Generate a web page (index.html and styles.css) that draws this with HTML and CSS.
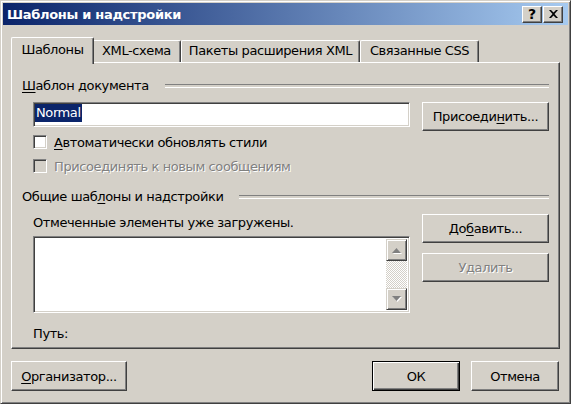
FILE: index.html
```html
<!DOCTYPE html>
<html lang="ru">
<head>
    <meta charset="UTF-8" />
    <meta name="viewport" content="width=device-width, initial-scale=1.0" />
    <title>Шаблоны и надстройки</title>
    <link rel="stylesheet" href="styles.css">
</head>
<body>
    <div class="window">
        <div class="titlebar">
            <span class="title">Шаблоны и надстройки</span>
            <div class="caption-buttons">
                <button class="cap-btn help">?</button>
                <button class="cap-btn">
                    <svg width="9" height="8" viewBox="0 0 9 8">
                        <path d="M0 0h2l2.5 2.5L7 0h2L5.5 4 9 8H7L4.5 5.5 2 8H0l3.5-4z" fill="#000"/>
                    </svg>
                </button>
            </div>
        </div>

        <div class="dialog">
            <div class="tabs">
                <div class="tab active tab-templates">Шаблоны</div>
                <div class="tab tab-xml">XML-схема</div>
                <div class="tab tab-packs">Пакеты расширения XML</div>
                <div class="tab tab-css">Связанные CSS</div>
            </div>

            <div class="panel">
                <div class="group-title"><span><u>Ш</u>аблон документа</span></div>

                <div class="doc-row">
                    <div class="textbox"><span class="selected">Normal</span></div>
                    <button class="btn">Присоеди<u>н</u>ить...</button>
                </div>

                <label class="check">
                    <span class="box"></span>
                    <span><u>А</u>втоматически обновлять стили</span>
                </label>
                <label class="check disabled">
                    <span class="box"></span>
                    <span>Присоединять к новым сообщениям</span>
                </label>

                <div class="group-title second"><span>Общие шаб<u>л</u>оны и надстройки</span></div>

                <div class="addins-row">
                    <div class="addins-list">
                        <p class="hint">Отмеченные элементы уже загружены.</p>
                        <div class="listbox">
                            <div class="scrollbar">
                                <div class="scroll-btn">
                                    <svg width="10" height="7" viewBox="0 0 10 7">
                                        <path d="M4.5 1 9 6H0z" fill="#fff" transform="translate(1 1)"/>
                                        <path d="M4.5 1 9 6H0z" fill="#808080"/>
                                    </svg>
                                </div>
                                <div class="scroll-track"></div>
                                <div class="scroll-btn">
                                    <svg width="10" height="7" viewBox="0 0 10 7">
                                        <path d="M0 0h9L4.5 5z" fill="#fff" transform="translate(1 1)"/>
                                        <path d="M0 0h9L4.5 5z" fill="#808080"/>
                                    </svg>
                                </div>
                            </div>
                        </div>
                    </div>
                    <div class="side-buttons">
                        <button class="btn">До<u>б</u>авить...</button>
                        <button class="btn" disabled>Удалить</button>
                    </div>
                </div>

                <p class="path">Путь:</p>
            </div>

            <div class="footer">
                <button class="btn organizer"><u>О</u>рганизатор...</button>
                <div class="footer-right">
                    <button class="btn default">ОК</button>
                    <button class="btn">Отмена</button>
                </div>
            </div>
        </div>
    </div>
</body>
</html>
```

FILE: styles.css
```css
* {
    box-sizing: border-box;
}

body {
    margin: 0;
    background-color: #d4d0c8;
    font-family: "DejaVu Sans", sans-serif;
    font-size: 13px;
    letter-spacing: -0.4px;
    color: #000;
}

u {
    text-decoration: underline;
    text-underline-offset: 2px;
}

/* Okno */
.window {
    width: 571px;
    height: 404px;
    padding: 2px;
    background-color: #d4d0c8;
    border: 1px solid;
    border-color: #d4d0c8 #404040 #404040 #d4d0c8;
    box-shadow: inset 1px 1px #fff, inset -1px -1px #808080;
}

.titlebar {
    height: 22px;
    display: flex;
    align-items: center;
    justify-content: space-between;
    padding: 0 5px 0 4px;
    background: linear-gradient(to right, #0a246a, #a6caf0);
}

.title {
    color: #fff;
    font-weight: bold;
    font-size: 13px;
    letter-spacing: -0.3px;
}

.caption-buttons {
    display: flex;
    gap: 1px;
}

.cap-btn {
    width: 20px;
    height: 17px;
    padding: 0;
    display: flex;
    align-items: center;
    justify-content: center;
    background-color: #d4d0c8;
    border: 1px solid;
    border-color: #fff #404040 #404040 #fff;
    box-shadow: inset -1px -1px #808080;
    font-family: "DejaVu Sans", sans-serif;
    font-weight: bold;
    font-size: 14px;
    line-height: 1;
}

.dialog {
    padding: 12px 8px 0 8px;
}

/* Zalozky */
.tabs {
    display: flex;
    align-items: flex-end;
    height: 25px;
    padding-left: 2px;
}

.tab {
    position: relative;
    height: 22px;
    line-height: 20px;
    text-align: center;
    background-color: #d4d0c8;
    border: 1px solid;
    border-color: #fff #404040 transparent #fff;
    border-bottom: none;
    border-radius: 2px 2px 0 0;
    box-shadow: inset -1px 0 #808080;
    white-space: nowrap;
}

.tab-templates { width: 79px; }
.tab-xml { width: 89px; }
.tab-packs { width: 179px; }
.tab-css { width: 119px; }

.tab.active {
    z-index: 2;
    width: 83px;
    height: 27px;
    line-height: 23px;
    margin: 0 -2px -2px -2px;
}

.panel {
    height: 287px;
    padding: 15px 10px 0 10px;
    border: 1px solid;
    border-color: #fff #404040 #404040 #fff;
    box-shadow: inset -1px -1px #808080;
}

.group-title {
    display: flex;
    align-items: center;
    line-height: 16px;
}

.group-title::after {
    content: "";
    flex: 1;
    height: 2px;
    margin-left: 16px;
    border-top: 1px solid #808080;
    border-bottom: 1px solid #fff;
}

.group-title.second {
    margin-top: 15px;
}

.doc-row {
    display: flex;
    justify-content: space-between;
    align-items: flex-start;
    margin: 8px 0 0 11px;
}

.textbox {
    width: 377px;
    height: 25px;
    padding: 1px 0 0 0;
    background-color: #fff;
    border: 1px solid;
    border-color: #808080 #fff #fff #808080;
    box-shadow: inset 1px 1px #404040, inset -1px -1px #d4d0c8;
}

.selected {
    display: inline-block;
    margin-left: 1px;
    padding: 0 1px;
    line-height: 18px;
    background-color: #0a246a;
    color: #fff;
}

/* Zaskrtavaci policka */
.check {
    display: flex;
    align-items: center;
    gap: 7px;
    height: 16px;
    margin: 3px 0 0 11px;
}

.check + .check {
    margin-top: 8px;
}

.box {
    width: 14px;
    height: 14px;
    background-color: #fff;
    border: 1px solid;
    border-color: #808080 #fff #fff #808080;
    box-shadow: inset 1px 1px #404040, inset -1px -1px #d4d0c8;
}

.check.disabled {
    color: #808080;
    text-shadow: 1px 1px #fff;
}

.check.disabled .box {
    background-color: #d4d0c8;
}

.addins-row {
    display: flex;
    justify-content: space-between;
    align-items: flex-start;
    margin: 9px 0 0 11px;
}

.addins-list {
    width: 377px;
}

.hint {
    margin: 1px 0 0;
    line-height: 16px;
}

.listbox {
    height: 77px;
    margin-top: 5px;
    display: flex;
    justify-content: flex-end;
    padding: 2px;
    background-color: #fff;
    border: 1px solid;
    border-color: #808080 #fff #fff #808080;
    box-shadow: inset 1px 1px #404040, inset -1px -1px #d4d0c8;
}

.scrollbar {
    width: 21px;
    display: flex;
    flex-direction: column;
}

.scroll-btn {
    height: 22px;
    display: flex;
    align-items: center;
    justify-content: center;
    background-color: #d4d0c8;
    border: 1px solid;
    border-color: #d4d0c8 #404040 #404040 #d4d0c8;
    box-shadow: inset 1px 1px #fff, inset -1px -1px #808080;
}

.scroll-track {
    flex: 1;
    background-color: #fff;
    background-image: repeating-conic-gradient(#d4d0c8 0 25%, #fff 0 50%);
    background-size: 2px 2px;
}

.side-buttons {
    display: flex;
    flex-direction: column;
    gap: 10px;
}

.path {
    margin: 13px 0 0 11px;
    line-height: 16px;
}

/* Tlacitka */
.btn {
    height: 29px;
    width: 127px;
    padding: 0;
    background-color: #d4d0c8;
    border: 1px solid;
    border-color: #fff #404040 #404040 #fff;
    box-shadow: inset -1px -1px #808080;
    font-family: inherit;
    font-size: 13px;
    letter-spacing: -0.4px;
    color: #000;
}

.btn:disabled {
    color: #808080;
    text-shadow: 1px 1px #fff;
}

.footer {
    display: flex;
    justify-content: space-between;
    margin-top: 12px;
    padding-right: 1px;
}

.footer .btn {
    height: 30px;
    width: 88px;
}

.footer .organizer {
    width: 116px;
}

.footer-right {
    display: flex;
    gap: 11px;
}

.btn.default {
    border-color: #000;
    box-shadow: inset 1px 1px #fff, inset -1px -1px #404040, inset -2px -2px #808080;
}
```
